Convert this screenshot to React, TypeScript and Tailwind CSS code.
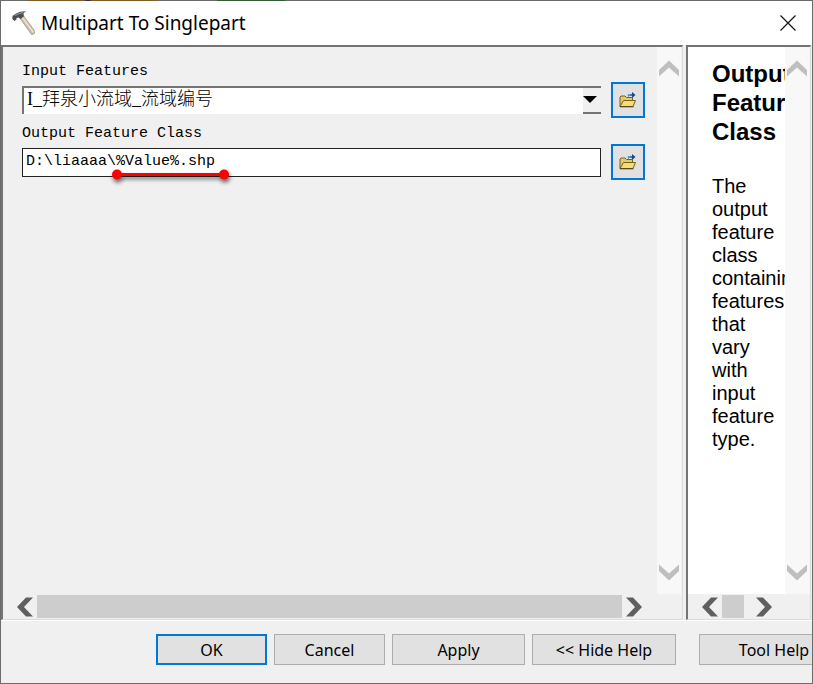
import React from "react";

const mono = "font-['Liberation_Mono','Noto_Sans_CJK_SC',monospace]";

function Hammer() {
  return (
    <svg className="h-6 w-6 shrink-0" viewBox="0 0 24 24" aria-hidden="true">
      <path d="M8 6 L12 4 L24 20.5 Q24 23.5 20.5 23.5 Z" fill="#c9bda8" stroke="#8f8472" strokeWidth=".6" />
      <path d="M11 6 L22.5 21.5" stroke="#eee6d6" strokeWidth="1.4" />
      <path d="M1.5 5 L5 2.5 L9 .7 L15 .3 L12.5 2.3 L12.8 5.5 L9.5 8 L7.5 6.5 L5.5 7 L5.5 8.5 L3.5 10 L1.3 8 Z" fill="#4b4e4e" />
      <path d="M4 4.5 L8.5 2.3 L12 1.5" stroke="#92989a" strokeWidth="1.2" fill="none" />
    </svg>
  );
}

function Folder() {
  return (
    <svg className="h-4 w-[18px]" viewBox="0 0 18 16" aria-hidden="true">
      <path d="M1 14.5 V5 L2 4 H6 L7.5 5.5 H13.5 V8.5" fill="#e3cb6c" stroke="#75601c" />
      <path d="M1 14.5 L4.5 8.5 H16.5 L14 14.5 Z" fill="#f4dc78" stroke="#75601c" />
      <path d="M1 14.8 H14.5" stroke="#4f4012" />
      <path d="M9.5 4.5 V3 H12" fill="none" stroke="#3c86c8" strokeWidth="1.4" />
      <path d="M11.5 2.2 H13 V0 L16.5 3 L13 6 V3.8 H11.5 Z" fill="#12488c" />
    </svg>
  );
}

const turns = { up: "", down: "rotate-180", left: "-rotate-90", right: "rotate-90" };

function Arrow({ dir }: { dir: keyof typeof turns }) {
  const vertical = dir === "up" || dir === "down";
  return (
    <button aria-label={"Scroll " + dir} className="flex h-6 w-6 shrink-0 items-center justify-center">
      <svg className={"h-5 w-5 shrink-0 " + turns[dir]} viewBox="0 0 20 20" aria-hidden="true">
        <path
          d={vertical ? "M0 11 L10 1.5 L20 11 V17.5 L10 8.5 L0 17.5 Z" : "M0.5 11 L10 2 L19.5 11 V18 L10 9 L0.5 18 Z"}
          fill={vertical ? "#bfbfbf" : "#606060"}
        />
      </svg>
    </button>
  );
}

function VerticalBar() {
  return (
    <div className="flex w-6 shrink-0 flex-col justify-between bg-[#f8f8f8] py-2.5">
      <Arrow dir="up" />
      <Arrow dir="down" />
    </div>
  );
}

function Browse({ label }: { label: string }) {
  return (
    <button aria-label={label} className="flex h-9 w-[34px] shrink-0 items-center justify-center border-2 border-[#0078d7] bg-[#e1e1e1]">
      <Folder />
    </button>
  );
}

export default function App() {
  const pane = "border-t-2 border-l-2 border-r border-b border-t-[#747474] border-l-[#747474] border-r-[#dcdcdc] border-b-[#dcdcdc]";
  const button = "h-[31px] shrink-0 border border-[#adadad] bg-[#e1e1e1]";
  return (
    <div className="flex min-h-screen flex-col overflow-hidden border-x border-b border-[#6b6b6b] bg-[#f0f0f0] text-black">
      <div className="flex h-px bg-[#6b6b6b]">
        <div className="ml-[26px] w-[58px] bg-[#7d5a28]" />
        <div className="w-1.5 bg-[#3a3638]" />
        <div className="w-[66px] bg-[#7d5a28]" />
        <div className="ml-[60px] w-[68px] bg-[#2f5e33]" />
      </div>
      <header className="flex h-11 items-center bg-white pr-4 pl-2.5 font-['Noto_Sans',sans-serif]">
        <Hammer />
        <h1 className="ml-1.5 flex-1 text-[19px] leading-6">Multipart To Singlepart</h1>
        <button aria-label="Close">
          <svg className="h-4 w-4" viewBox="0 0 16 16" aria-hidden="true">
            <path d="M.5 .5 L15.5 15.5 M15.5 .5 L.5 15.5" stroke="#111" strokeWidth="1.2" />
          </svg>
        </button>
      </header>

      <main className="flex flex-1 gap-[3px] pr-px">
        <section className={"flex min-w-0 flex-1 flex-col " + pane}>
          <div className="flex flex-1">
            <div className={"min-w-0 flex-1 pt-[15px] pr-3 pl-[19px] text-[15px] " + mono}>
              <label htmlFor="input-features" className="block h-5 leading-5">Input Features</label>
              <div className="flex items-center gap-2.5">
                <div className="relative h-7 flex-1 border-t-2 border-l-2 border-[#747474] bg-white">
                  <select id="input-features" className="h-[22px] w-full appearance-none pl-[3px] font-['Liberation_Serif','Noto_Sans_CJK_SC',serif] text-[18px] leading-[22px] font-light">
                    <option>I_拜泉小流域_流域编号</option>
                  </select>
                  <span className="pointer-events-none absolute top-0 right-0 flex h-[26px] w-[18px] items-center justify-start border-b-2 border-[#747474] bg-[#f0f0f0]">
                    <svg className="h-2 w-3.5" viewBox="0 0 14 8" aria-hidden="true">
                      <path d="M0 0 H14 L7 7 Z" />
                    </svg>
                  </span>
                </div>
                <Browse label="Browse input features" />
              </div>
              <label htmlFor="output-class" className="mt-1.5 block h-5 leading-5">Output Feature Class</label>
              <div className="flex items-center gap-2.5">
                <div className="relative flex-1">
                  <input id="output-class" defaultValue="D:\liaaaa\%Value%.shp" className="block h-[29px] w-full border border-[#222] bg-white px-[3px] pb-0.5" />
                  <svg className="pointer-events-none absolute top-5 left-[88px] h-5 w-32 drop-shadow-[1px_3px_2px_rgba(0,0,0,0.6)]" viewBox="0 0 128 20" aria-hidden="true">
                    <path d="M7 6.5 H114" stroke="#f00" strokeWidth="3" />
                    <circle cx="7" cy="6.5" r="5" fill="#f00" />
                    <circle cx="114" cy="6.5" r="5" fill="#f00" />
                  </svg>
                </div>
                <Browse label="Browse output feature class" />
              </div>
            </div>
            <VerticalBar />
            <div className="w-px" />
          </div>
          <div className="flex h-[25px] items-center pr-9 pl-2.5">
            <Arrow dir="left" />
            <div className="h-[23px] flex-1 bg-[#cdcdcd]" />
            <Arrow dir="right" />
          </div>
        </section>

        <aside className={"flex w-[125px] shrink-0 flex-col " + pane}>
          <div className="flex flex-1 bg-white">
            <div className="min-w-0 flex-1 overflow-hidden px-6 pt-3 font-['Liberation_Sans',Arial,sans-serif]">
              <h2 className="text-[24px] leading-[29px] font-bold">Output Feature Class</h2>
              <p className="mt-[29px] text-[20px] leading-[23px]">The output feature class containing features that vary with input feature type.</p>
            </div>
            <VerticalBar />
            <div className="w-px bg-[#f8f8f8]" />
          </div>
          <div className="flex h-[25px] items-center px-2.5">
            <Arrow dir="left" />
            <div className="h-[23px] w-[22px] bg-[#cdcdcd]" />
            <div className="w-2" />
            <Arrow dir="right" />
          </div>
        </aside>
      </main>

      <footer className="-mr-[37px] flex h-[63px] justify-end gap-[7px] border-t border-white pt-[13px] font-['Noto_Sans',sans-serif] text-[16px]">
        <button className="h-[31px] w-[111px] shrink-0 border-2 border-[#0078d7] bg-[#e1e1e1]">OK</button>
        <button className={"w-[111px] " + button}>Cancel</button>
        <button className={"w-[133px] " + button}>Apply</button>
        <button className={"w-36 " + button}>&lt;&lt; Hide Help</button>
        <button className={"ml-4 w-[150px] " + button}>Tool Help</button>
      </footer>
    </div>
  );
}
